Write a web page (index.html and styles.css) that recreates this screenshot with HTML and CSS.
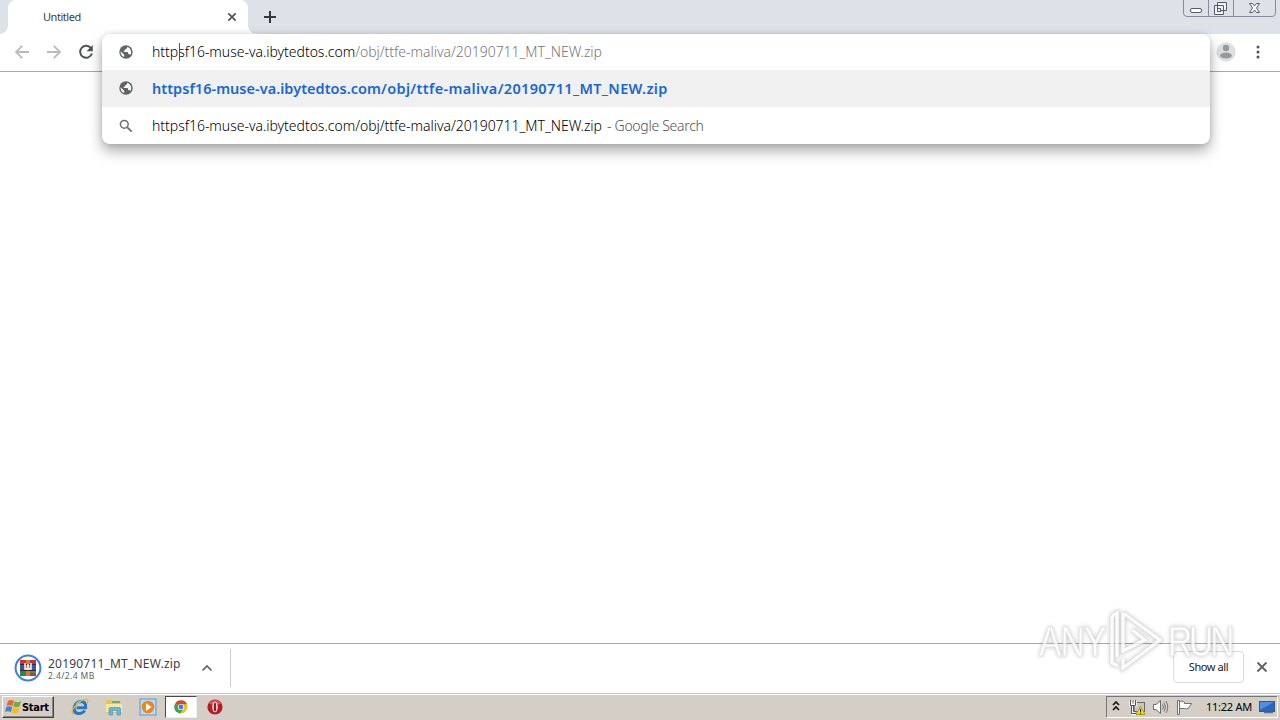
FILE: index.html
```html
<!DOCTYPE html>
<html lang="en">
<head>
<meta charset="utf-8">
<title>Untitled</title>
<link rel="stylesheet" href="styles.css">
</head>
<body>
<svg class="defs" width="0" height="0">
  <symbol id="globe" viewBox="0 0 16 16"><circle cx="8" cy="8" r="6.700" fill="#5f6368"/><path d="M2.500 7.200 6.200 10.800V12.900C4 12.300 2.400 10.300 2.500 7.200zM9.200 2.700C9.500 4.200 8.500 4.800 7.300 5V6.600H5.800V8H9.200C10 8 10.200 8.800 10.200 10H11.300L12.200 11C13.900 8.800 13.700 4.600 9.200 2.700z" fill="#fff"/></symbol>
</svg>
<div class="desktop">
  <header class="tabstrip">
    <div class="tab"><span class="tab-title">Untitled</span>
      <svg width="10" height="10" viewBox="0 0 10 10"><path d="M1.300 1.300 8.700 8.700M8.700 1.300 1.300 8.700" stroke="#505357" stroke-width="1.700"/></svg>
    </div>
    <svg class="new-tab" width="14" height="14" viewBox="0 0 14 14"><path d="M7 1V13M1 7H13" stroke="#34383e" stroke-width="2"/></svg>
    <div class="window-buttons">
      <svg width="93" height="17" viewBox="0 0 93 17"><path d="M.5 0V13Q.5 16.500 4 16.500H89Q92.500 16.500 92.500 13V0M25.500 0V16M50.500 0V16" fill="none" stroke="#858b98"/><rect x="7.500" y="8.500" width="11" height="4" rx="1.500" fill="#fff" stroke="#555a67"/><path d="M34.500 2.500H43.500V10.500H34.500zM31.500 5.500H40.500V14.500H31.500z" fill="#f3f4f7" stroke="#555a67"/><rect x="34.500" y="8.500" width="3" height="3" fill="#fff" stroke="#555a67"/><path d="M66.500 3.500H69.500L71.500 6 73.500 3.500H76.500L73.500 8 76.500 12.500H73.500L71.500 10 69.500 12.500H66.500L69.500 8z" fill="#fff" stroke="#555a67"/></svg>
    </div>
  </header>

  <nav class="toolbar">
    <svg class="arrow" width="16" height="16" viewBox="0 0 16 16"><path d="M15 8H2M8.200 1.800 2 8 8.200 14.200" fill="none" stroke="#b9bbbd" stroke-width="1.800"/></svg>
    <svg class="arrow" width="16" height="16" viewBox="0 0 16 16"><path d="M1 8H14M7.800 1.800 14 8 7.800 14.200" fill="none" stroke="#b9bbbd" stroke-width="1.800"/></svg>
    <svg class="arrow" width="16" height="16" viewBox="0 0 16 16"><path d="M13.200 4.500A6 6 0 1 0 13.900 9.500" fill="none" stroke="#505357" stroke-width="2"/><path d="M14.800 1V7.300H8.500z" fill="#505357"/></svg>
    <span class="grow"></span>
    <svg class="avatar" width="20" height="20" viewBox="0 0 20 20"><circle cx="10" cy="10" r="9.700" fill="#dedfe0"/><circle cx="10" cy="6" r="3.200" fill="#98999b"/><ellipse cx="10" cy="13.500" rx="5.900" ry="3" fill="#98999b"/></svg>
    <svg class="dots" width="4" height="14" viewBox="0 0 4 14"><g fill="#505357"><circle cx="2" cy="2" r="1.500"/><circle cx="2" cy="7" r="1.500"/><circle cx="2" cy="12" r="1.500"/></g></svg>
  </nav>

  <main class="page"></main>

  <footer class="shelf">
    <svg class="file-icon" width="28" height="28" viewBox="0 0 28 28"><circle cx="14" cy="14" r="12.400" fill="#fff" stroke="#3f7de0" stroke-width="2"/><path d="M6 6H12V11H6zM16 17H22V22H16z" fill="#cf2f3c"/><path d="M16 6H22V11H16z" fill="#b93648"/><path d="M6 11H12V16H6zM16 11H22V16H16z" fill="#3457b1"/><path d="M6 16H12V22H6z" fill="#288b45"/><path d="M16 16H22V19H16z" fill="#3d9d3e"/><path d="M12 6H16V22H12z" fill="#d77b2a"/><path d="M6 10.500H22M6 16.500H22" stroke="#382532"/><path d="M11 9V15H17V9M14 10V15" fill="none" stroke="#fff" stroke-width="1.500"/></svg>
    <div class="file"><span class="file-name">20190711_MT_NEW.zip</span><span class="file-size">2.4/2.4 MB</span></div>
    <svg class="chevron" width="12" height="8" viewBox="0 0 12 8"><path d="M1.500 6.500 6 2 10.500 6.500" fill="none" stroke="#5f6368" stroke-width="1.700"/></svg>
    <span class="divider"></span>
    <span class="grow"></span>
    <button class="show-all">Show all</button>
    <svg class="shelf-close" width="12" height="12" viewBox="0 0 12 12"><path d="M1.500 1.500 10.500 10.500M10.500 1.500 1.500 10.500" stroke="#5f6368" stroke-width="1.900"/></svg>
  </footer>

  <div class="taskbar">
    <button class="start">
      <svg width="17" height="16" viewBox="0 0 17 16"><path d="M3 2Q6 0 9 2L7.500 7Q5 5.500 1.500 7z" fill="#e36b2e"/><path d="M9.700 2.500Q13 4 16 2.300L14.500 7.500Q11.500 9 8.300 7.300z" fill="#70ae39"/><path d="M1.200 8Q4.500 6.500 7.200 8.200L5.900 13Q3 11.500 0 13z" fill="#4385ca"/><path d="M8 8.500Q11 10 14.300 8.600L13 13.800Q10 15.300 6.600 13.600z" fill="#f3bb2a"/></svg>
      <span>Start</span>
    </button>
    <div class="launch">
      <svg class="task-icon" width="18" height="18" viewBox="0 0 18 18"><g transform="skewX(-8) translate(1.500 0)"><path d="M14 12.500Q12 16 8 15.500 3 14.800 3 9.500 3.200 4 8.500 3.500 14.500 3.500 14.500 9.700H5.500" fill="none" stroke="#2479c5" stroke-width="3"/><path d="M4 6.500Q6 3.500 9 3.500" fill="none" stroke="#70c5f0" stroke-width="1.500"/></g><path d="M2 16Q-1 13 6 6.500 13-.5 16.500 2 17.500 3 15.800 6" fill="none" stroke="#e6b52f" stroke-width="1.300"/></svg>
      <svg class="task-icon" width="18" height="18" viewBox="0 0 18 18"><path d="M1 2H7L8.500 4H16V15H1z" fill="#e8c45e"/><path d="M1 6H17V14H1z" fill="#f9e6a0"/><path d="M7 4H15" stroke="#77ad64" stroke-width="2"/><path d="M4 17V11Q4 9.500 5.500 9.500H14Q15.500 9.500 15.500 11V17H12V12.500H7.500V17z" fill="#65b6dc" stroke="#4b98bd" stroke-width=".7"/></svg>
      <svg class="task-icon" width="18" height="18" viewBox="0 0 18 18"><rect x="1" y="1" width="16" height="16" fill="#b9d9f4" stroke="#5d99cd"/><circle cx="9" cy="9" r="6.300" fill="#ef871c"/><path d="M7 5 12.500 9 7 13z" fill="#fff"/></svg>
      <div class="active-task"><svg width="14" height="14" viewBox="0 0 14 14"><circle cx="7" cy="7" r="6.500" fill="#e6c52e"/><path d="M7 7 1.200 3.500A6.600 6.600 0 0 1 13 4.200H7z" fill="#d94437"/><path d="M1.200 3.500A6.600 6.600 0 0 0 6.200 13.500L9.500 8.500 7 7z" fill="#41a15a"/><circle cx="7" cy="7" r="3.100" fill="#fff"/><circle cx="7" cy="7" r="2.400" fill="#3e7de0"/></svg></div>
      <svg class="opera" width="16" height="16" viewBox="0 0 16 16"><circle cx="8" cy="8" r="7.600" fill="#b51c22"/><path d="M2 4.500A7 7 0 0 1 14 4.500Q8 7 2 4.500" fill="#dc555a"/><ellipse cx="8" cy="8" rx="2.700" ry="5.300" fill="#fff"/><ellipse cx="8" cy="8" rx="1.300" ry="4.500" fill="#9c151b"/></svg>
    </div>
    <span class="grow"></span>
    <div class="tray">
      <svg width="8" height="12" viewBox="0 0 8 12"><path d="M1 4 4 1 7 4M1 9 4 6 7 9" fill="none" stroke="#111" stroke-width="1.600"/></svg>
      <svg class="network" width="17" height="17" viewBox="0 0 17 17"><rect x="5.500" y="3.500" width="10" height="9" fill="#c7c8c5" stroke="#686b6a"/><path d="M1.500 2V6H6.500V2M4 6V15H7M4 1V4" fill="none" stroke="#fff" stroke-width="2.500"/><path d="M1.500 1V6.500H6.500V1M4 1V4M2.500 6V14.500H7M4.500 6V12.500H7" fill="none" stroke="#555"/><path d="M11.500 7.500 16 15.500H7z" fill="#f5db24" stroke="#b19711"/><path d="M11.500 10V13M11.500 13.700V15" stroke="#222"/></svg>
      <svg class="sound" width="17" height="16" viewBox="0 0 17 16"><path d="M1.500 5.500H4L8.500 1.500V14.500L4 10.500H1.500z" fill="#fff" stroke="#6b6b6b"/><path d="M10.500 5.500Q12.500 8 10.500 10.500M12 3.500Q15 8 12 12.500M14 2Q17.500 8 14 14" fill="none" stroke="#777"/></svg>
      <svg class="flag" width="17" height="17" viewBox="0 0 17 17"><path d="M1.500 1.500H3.500V15.500H1.500zM3.500 2.500Q6 1.500 8.500 3V4.500H15.500L13 8.500Q11 11 8.500 9.500H3.500" fill="#fff" stroke="#707070"/></svg>
      <span class="clock">11:22 AM</span>
      <svg width="16" height="13" viewBox="0 0 16 13"><rect x=".5" y=".5" width="15" height="10" fill="#2865bd" stroke="#315a91"/><path d="M1 1H15L1 9z" fill="#4b91dc"/><path d="M5 11.500H14" stroke="#5f7189" stroke-width="1.500"/></svg>
    </div>
  </div>

  <section class="omnibox">
    <div class="row"><svg class="row-icon"><use href="#globe"/></svg><span class="url">httpsf16-muse-va.ibytedtos.com<span class="path">/obj/ttfe-maliva/20190711_MT_NEW.zip</span></span><span class="caret"></span></div>
    <div class="row selected"><svg class="row-icon"><use href="#globe"/></svg><span class="url match"><span class="host">httpsf16-muse-va.ibytedtos.com</span>/obj/ttfe-maliva/20190711_MT_NEW.zip</span></div>
    <div class="row"><svg class="row-icon" viewBox="0 0 16 16"><circle cx="6.300" cy="6.300" r="3.900" fill="none" stroke="#6b6e72" stroke-width="1.500"/><path d="M9.300 9.300 13.700 13.700" stroke="#6b6e72" stroke-width="1.800"/></svg><span class="url">httpsf16-muse-va.ibytedtos.com/obj/ttfe-maliva/20190711_MT_NEW.zip</span><span class="provider">- Google Search</span></div>
  </section>

  <div class="watermark">
    <span class="brand any">ANY</span>
    <svg width="58" height="64" viewBox="0 0 58 64"><path d="M16 4 53 31 16 59V50M16 4V42L38 31 25 21M5 7V54L11 57M5 7 10 4V48" fill="none" stroke="#cfcfcf" stroke-width="4.500"/><path d="M16 4 53 31 16 59V50M16 4V42L38 31 25 21M5 7V54L11 57M5 7 10 4V48" fill="none" stroke="#fafafa" stroke-width="3.300"/></svg>
    <span class="brand run">RUN</span>
  </div>
</div>
</body>
</html>
```
FILE: styles.css
```css
* { box-sizing: border-box; }
body { margin: 0; font-family: "Noto Sans", "Open Sans", sans-serif; color: #222; }
svg { display: block; flex: none; }
button { font-family: inherit; }
.defs { position: absolute; }
.desktop { position: relative; display: flex; flex-direction: column; width: 1280px; height: 720px; overflow: hidden; background: #fff; }
.grow { flex: 1; }
.tabstrip { display: flex; height: 34px; background: #dde1e8; padding-left: 8px; }
.tab { position: relative; display: flex; align-items: center; width: 240px; padding: 0 11px 0 35px; background: #fff; border-radius: 8px 8px 0 0; }
.tab::before, .tab::after { content: ""; position: absolute; bottom: 0; width: 8px; height: 8px; }
.tab::before { left: -8px; background: radial-gradient(circle at 0 0, transparent 7.500px, #fff 8px); }
.tab::after { right: -8px; background: radial-gradient(circle at 100% 0, transparent 7.500px, #fff 8px); }
.tab-title { flex: 1; padding-bottom: 2px; font-size: 11px; letter-spacing: -.45px; color: #3c4043; white-space: nowrap; }
.new-tab { margin: 10px 0 0 15px; }
.window-buttons { margin-left: auto; margin-right: 4px; }
.toolbar { display: flex; align-items: center; height: 38px; padding: 0 20px 1px 14px; gap: 16px; border-bottom: 1px solid #a9a9a9; }
.toolbar .avatar { margin-right: 4px; }
.page { flex: 1; }
.shelf { display: flex; align-items: center; height: 50px; border-top: 1px solid #a8a8a8; padding: 0 12px 2px 14px; }
.file { display: flex; flex-direction: column; width: 133px; margin: 2px 0 0 6px; white-space: nowrap; }
.file-name { font-size: 12px; line-height: 14px; letter-spacing: .2px; color: #3c4043; }
.file-size { font-size: 8.500px; line-height: 10px; letter-spacing: .4px; color: #5f6368; }
.chevron { margin-left: 20px; }
.divider { width: 1px; height: 38px; margin-left: 17px; background: #cfcfcf; }
.show-all { width: 71px; height: 32px; margin-bottom: 1px; padding: 0 0 2px; font-size: 11px; letter-spacing: -.4px; background: #fff; color: #222; border: 1px solid #dadce0; border-radius: 4px; }
.shelf-close { margin: 0 0 1px 12px; }
.taskbar { display: flex; align-items: center; height: 27px; background: #d4cec7; border-top: 1px solid #c5c0ba; box-shadow: inset 0 1px #fff; padding: 1px 2px; }
.start { display: flex; align-items: center; width: 52px; height: 22px; padding: 0 2px; background: #d4cec7; border: 1px solid; border-color: #fff #444 #444 #fff; box-shadow: inset -1px -1px #8b8781; color: #000; }
.start span { font: bold 11px "DejaVu Sans Condensed", "DejaVu Sans", sans-serif; letter-spacing: -.3px; }
.launch { display: flex; align-items: center; padding-left: 1px; }
.task-icon { margin-left: 16px; }
.active-task { display: flex; align-items: center; justify-content: center; width: 32px; height: 22px; margin-left: 8px; background: #fff; border: 1px solid; border-color: #494949 #eee #eee #494949; }
.opera { margin-left: 10px; }
.tray { display: flex; align-items: center; width: 172px; height: 22px; padding: 0 2px 0 5px; border: 1px solid; border-color: #777 #fff #fff #777; }
.network { margin-left: 9px; }
.sound { margin-left: 6px; }
.flag { margin-left: 7px; }
.clock { flex: 1; padding: 0 7px 1px 0; text-align: right; font-size: 11px; letter-spacing: -.25px; color: #000; white-space: nowrap; }
.omnibox { position: absolute; left: 102px; top: 34px; width: 1108px; height: 110px; background: #fff; border-radius: 8px; overflow: hidden; box-shadow: 0 7px 14px rgba(0,0,0,.33), 0 0 5px rgba(0,0,0,.12); }
.row { position: relative; display: flex; align-items: center; height: 37px; padding-left: 16px; white-space: nowrap; }
.row:first-child { height: 36px; }
.row:first-child .url { padding-bottom: 1px; }
.selected { background: #f0f0f0; }
.row-icon { width: 16px; height: 16px; margin-right: 18px; }
.selected .row-icon { margin-bottom: 1px; }
.url { font-size: 14px; font-weight: 300; letter-spacing: -.03px; color: #000; }
.path { color: #777; }
.match { padding-bottom: 2px; font-size: 14.500px; font-weight: 600; letter-spacing: .35px; color: #1967d2; }
.host { letter-spacing: .03px; }
.provider { margin-left: 5px; font-size: 14px; font-weight: 300; letter-spacing: -.28px; color: #505357; }
.caret { position: absolute; left: 77px; top: 9px; width: 1px; height: 18px; background: #555; }
.watermark { position: absolute; left: 1039px; top: 609px; display: flex; align-items: center; opacity: .75; filter: drop-shadow(0 0 2px rgba(0,0,0,.3)); }
.brand { display: inline-block; font: 43px/64px "Liberation Sans", Arial, sans-serif; color: #fff; -webkit-text-stroke: 1px #dedede; white-space: nowrap; transform-origin: left center; transform: scaleX(.78); }
.any { width: 68px; letter-spacing: -1px; }
.run { width: 66px; margin-left: 3px; letter-spacing: -4px; }
```
